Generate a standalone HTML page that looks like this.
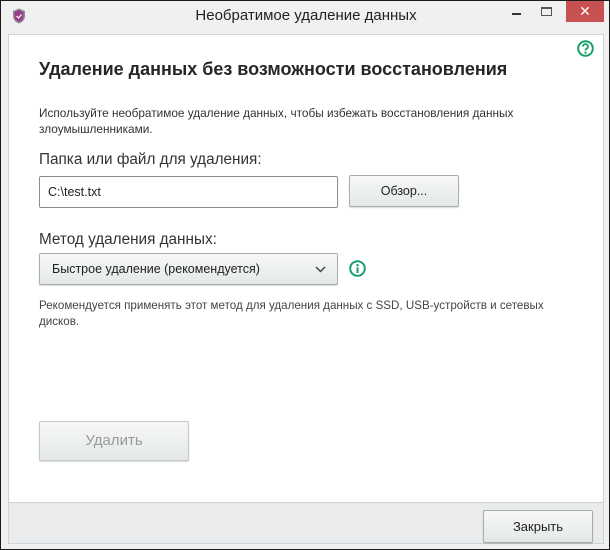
<!DOCTYPE html>
<html><head><meta charset="utf-8"><style>
*{margin:0;padding:0;box-sizing:border-box}
body{width:610px;height:550px;background:#f0f0f0;font-family:"Liberation Sans","DejaVu Sans",sans-serif;position:relative;overflow:hidden;color:#333}
.win{position:absolute;left:0;top:0;width:610px;height:550px;border:1px solid #1a1a1a;background:#f0f0f0}
.title{position:absolute;left:0;top:6px;width:610px;text-align:center;font-size:15px;color:#222}
.close{position:absolute;left:565px;top:0;width:38px;height:21px;background:#c75050;color:#fff;text-align:center;font-size:14px;line-height:20px}
.content{position:absolute;left:7px;top:33px;width:596px;height:510px;background:#fff;border:1px solid #cfd4d8}
.footer{position:absolute;left:0;bottom:0;width:594px;height:41px;background:#e9ebec;border-top:1px solid #cdd4d8}
.btn{position:absolute;border:1px solid #a9adb0;border-radius:2px;background:linear-gradient(#f7f8f8,#e3e8e7);box-shadow:0 1px 1px rgba(0,0,0,.15);text-align:center;font-size:13px;color:#222}
.abs{position:absolute}
</style></head><body>
<div class="win">
<svg class="abs" style="left:11px;top:7px" width="14" height="16" viewBox="0 0 14 16"><path d="M7 0.5L13 3v5c0 4-3 6.5-6 7.5C4 14.5 1 12 1 8V3z" fill="#8a8f93"/><path d="M7 2L11.5 4v4c0 3-2.2 5-4.5 6C4.7 13 2.5 11 2.5 8V4z" fill="#9b3c8c"/><path d="M4.5 8l2 2 3-3.5" stroke="#fff" stroke-width="1.2" fill="none"/></svg>
<div class="title">Необратимое удаление данных</div>
<div class="abs" style="left:511px;top:12px;width:9px;height:2px;background:#333"></div>
<div class="abs" style="left:540px;top:6px;width:11px;height:9px;border:1px solid #555;border-top-width:2px"></div>
<div class="close">✕</div>
<div class="content">
<svg class="abs" style="left:568px;top:5px" width="17" height="17" viewBox="0 0 17 17"><circle cx="8.5" cy="8.5" r="7.3" fill="none" stroke="#1a9e6a" stroke-width="2"/><path d="M6 6.6a2.5 2.4 0 1 1 3.6 2.1c-.8.4-1.1.8-1.1 1.7" fill="none" stroke="#1a9e6a" stroke-width="1.8"/><circle cx="8.5" cy="12.6" r="1.1" fill="#1a9e6a"/></svg>
<div class="abs" style="left:30px;top:24px;font-size:18px;font-weight:bold;color:#262626">Удаление данных без возможности восстановления</div>
<div class="abs" style="left:30px;top:70px;font-size:11.8px;line-height:16px;color:#333;width:520px">Используйте необратимое удаление данных, чтобы избежать восстановления данных злоумышленниками.</div>
<div class="abs" style="left:30px;top:116px;font-size:15.3px;color:#333">Папка или файл для удаления:</div>
<div class="abs" style="left:30px;top:141px;width:299px;height:32px;border:1px solid #8c8c8c;border-radius:2px;font-size:12.5px;padding:8px 0 0 8px;color:#222">C:\test.txt</div>
<div class="btn" style="left:340px;top:140px;width:110px;height:32px;line-height:30px;font-size:12.5px">Обзор...</div>
<div class="abs" style="left:30px;top:196px;font-size:15.3px;color:#333">Метод удаления данных:</div>
<div class="btn" style="left:30px;top:218px;width:299px;height:32px;line-height:30px;text-align:left;padding-left:12px;font-size:12.5px">Быстрое удаление (рекомендуется)
<svg class="abs" style="right:11px;top:12px" width="11" height="7" viewBox="0 0 11 7"><path d="M1 1l4.5 4.5L10 1" stroke="#444" stroke-width="1.5" fill="none"/></svg></div>
<svg class="abs" style="left:340px;top:225px" width="17" height="17" viewBox="0 0 17 17"><circle cx="8.5" cy="8.5" r="7.3" fill="none" stroke="#1a9e6a" stroke-width="2"/><circle cx="8.5" cy="5.2" r="1.2" fill="#1a9e6a"/><rect x="7.5" y="7.4" width="2" height="5.6" fill="#1a9e6a"/></svg>
<div class="abs" style="left:30px;top:263px;font-size:11.6px;line-height:16px;color:#444;width:520px">Рекомендуется применять этот метод для удаления данных с SSD, USB-устройств и сетевых дисков.</div>
<div class="btn" style="left:30px;top:386px;width:150px;height:40px;line-height:38px;font-size:15px;color:#9a9a9a;border-color:#c4c8ca">Удалить</div>
<div class="footer"><div class="btn" style="left:474px;top:7px;width:110px;height:33px;line-height:31px">Закрыть</div></div>
</div>
</div>
</body></html>
